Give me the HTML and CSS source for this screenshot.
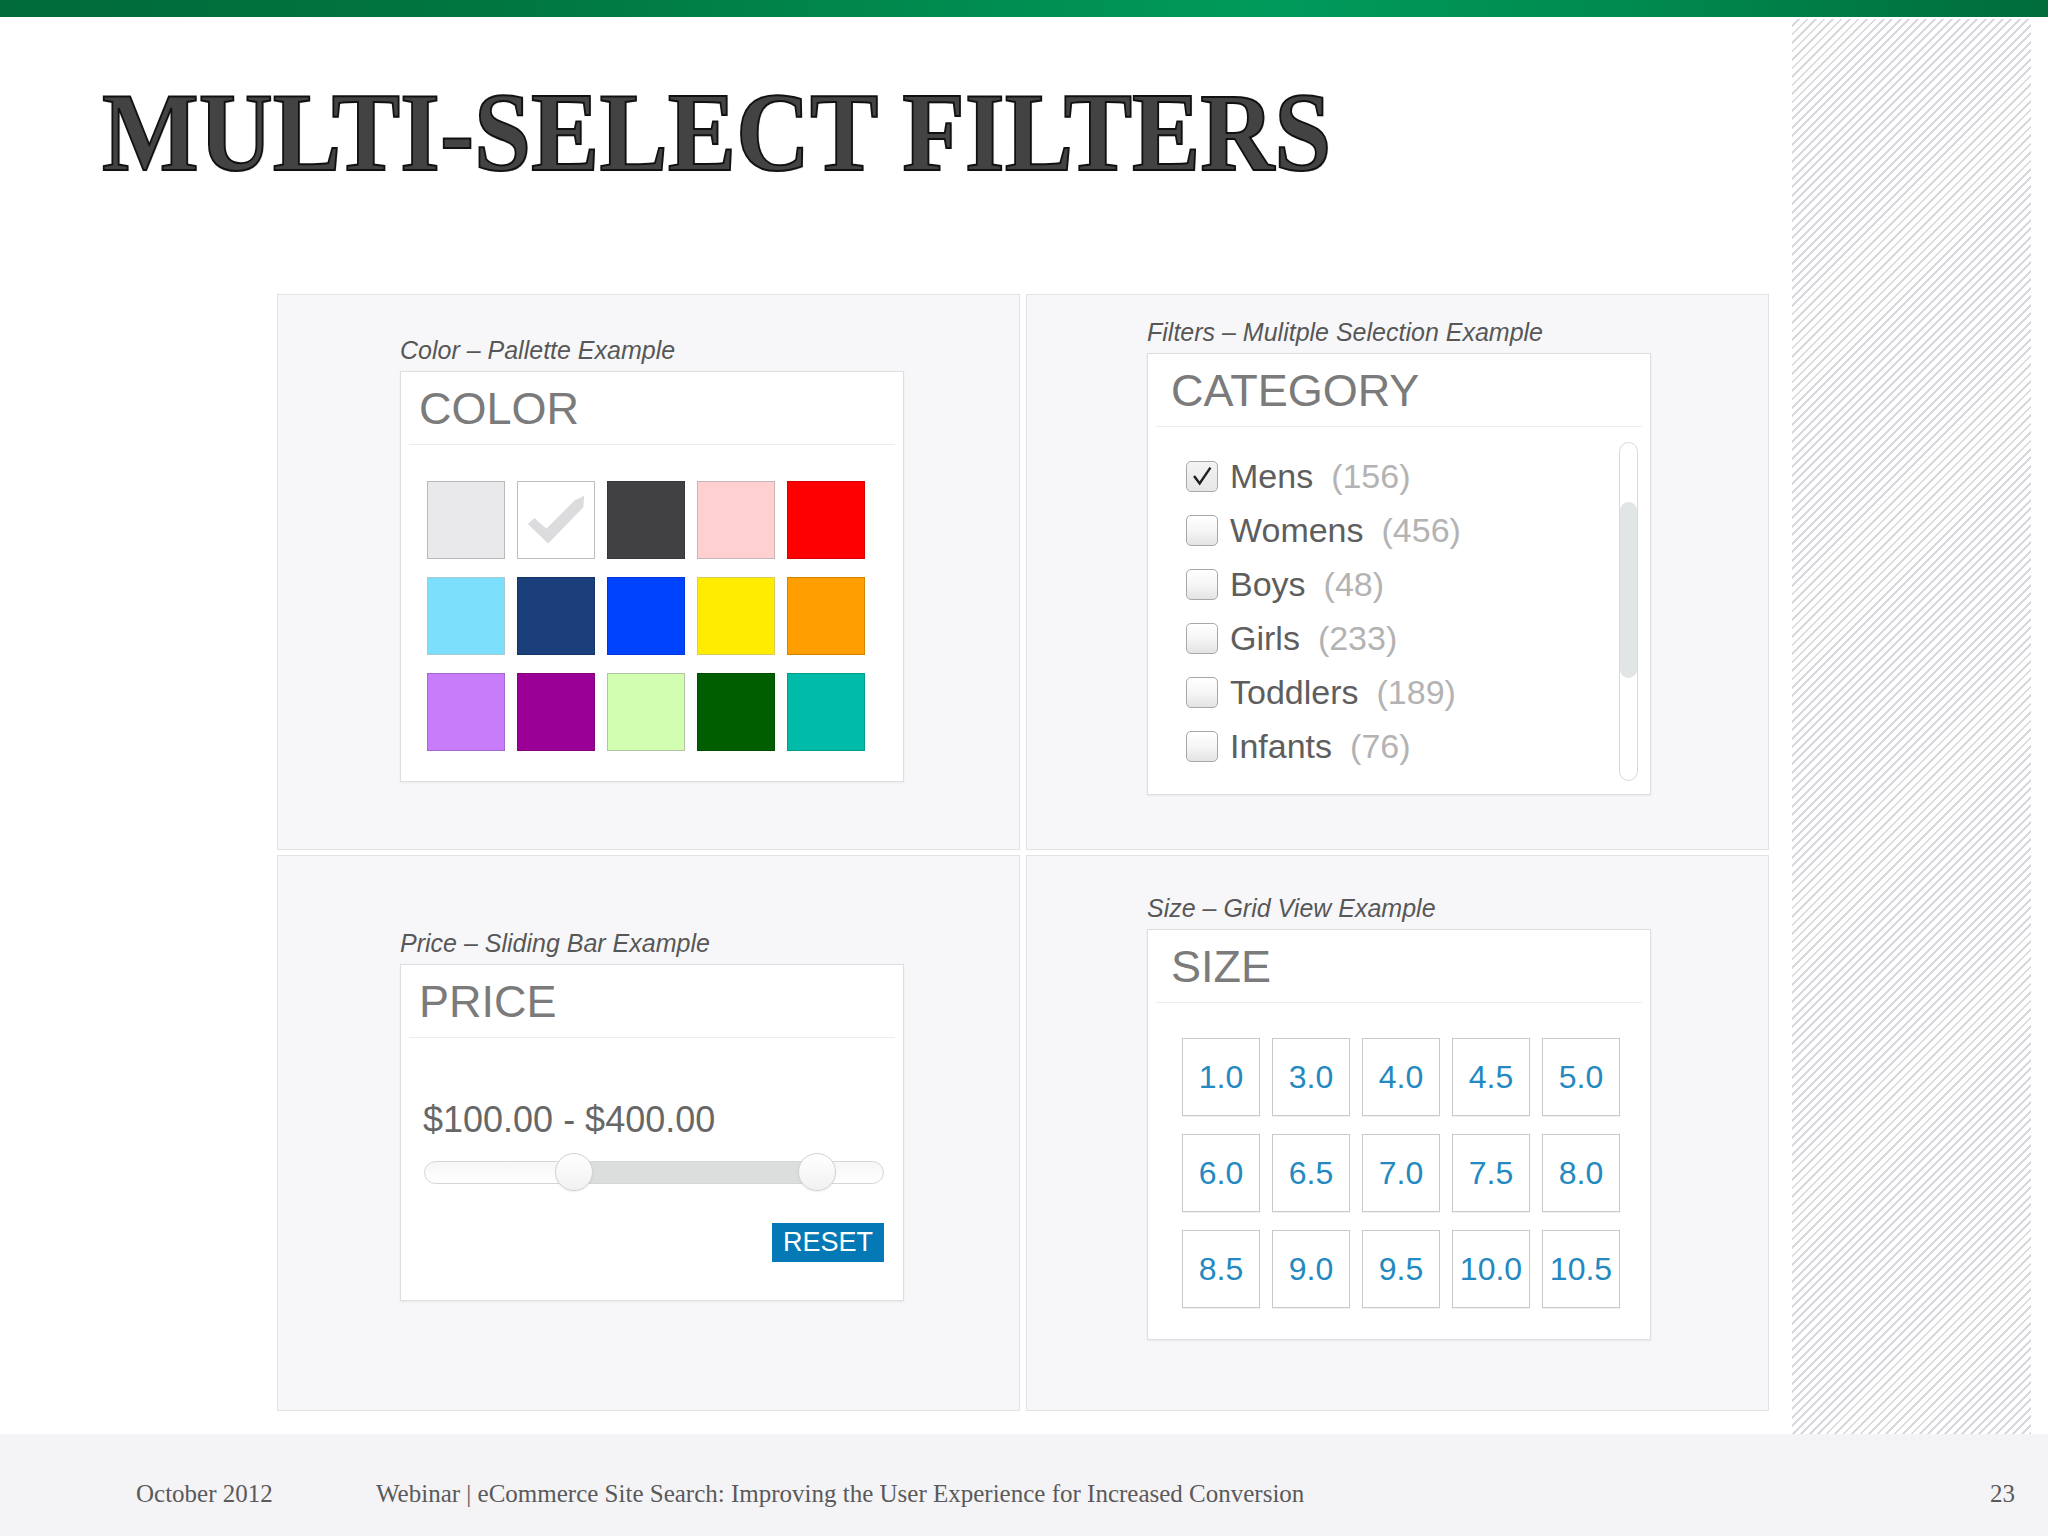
FILE: index.html
```html
<!DOCTYPE html>
<html lang="en">
<head>
<meta charset="utf-8">
<title>Multi-Select Filters</title>
<link rel="stylesheet" href="styles.css">
</head>
<body>
<div class="slide">
  <div class="topbar"></div>
  <div class="main">
    <div class="content">
      <h1 class="title"><span class="title-text">MULTI-SELECT FILTERS</span></h1>
      <div class="panels">
        <section class="panel panel-color">
          <div class="caption">Color – Pallette Example</div>
          <div class="card">
            <div class="card-head"><h2>COLOR</h2></div>
            <div class="swatches">
              <span class="swatch sw-lightgray"></span>
              <span class="swatch sw-white"><svg viewBox="0 0 78 78"><polygon points="10,43 17,37 29,48 58,19 68,14 67,26 31,63" fill="#dcdcde"/></svg></span>
              <span class="swatch sw-charcoal"></span>
              <span class="swatch sw-pink"></span>
              <span class="swatch sw-red"></span>
              <span class="swatch sw-sky"></span>
              <span class="swatch sw-navy"></span>
              <span class="swatch sw-blue"></span>
              <span class="swatch sw-yellow"></span>
              <span class="swatch sw-orange"></span>
              <span class="swatch sw-lavender"></span>
              <span class="swatch sw-purple"></span>
              <span class="swatch sw-mint"></span>
              <span class="swatch sw-green"></span>
              <span class="swatch sw-teal"></span>
            </div>
          </div>
        </section>
        <section class="panel panel-category">
          <div class="caption">Filters – Mulitple Selection Example</div>
          <div class="card">
            <div class="card-head"><h2>CATEGORY</h2></div>
            <div class="cat-body">
              <ul class="cat-list">
                <li class="cat-item"><span class="checkbox checked"><svg viewBox="0 0 32 31"><path d="M7.5 15 L13.5 23 L25 6" fill="none" stroke="#1f1f1f" stroke-width="2.6" stroke-linejoin="miter"/></svg></span>Mens<span class="count">(156)</span></li>
                <li class="cat-item"><span class="checkbox"></span>Womens<span class="count">(456)</span></li>
                <li class="cat-item"><span class="checkbox"></span>Boys<span class="count">(48)</span></li>
                <li class="cat-item"><span class="checkbox"></span>Girls<span class="count">(233)</span></li>
                <li class="cat-item"><span class="checkbox"></span>Toddlers<span class="count">(189)</span></li>
                <li class="cat-item"><span class="checkbox"></span>Infants<span class="count">(76)</span></li>
              </ul>
              <div class="scrollbar"><div class="thumb"></div></div>
            </div>
          </div>
        </section>
        <section class="panel panel-price">
          <div class="caption">Price – Sliding Bar Example</div>
          <div class="card">
            <div class="card-head"><h2>PRICE</h2></div>
            <div class="price-body">
              <div class="price-range">$100.00 - $400.00</div>
              <div class="slider">
                <div class="track">
                  <div class="fill"></div>
                  <div class="handle handle-min"></div>
                  <div class="handle handle-max"></div>
                </div>
              </div>
              <div class="reset-row"><span class="reset">RESET</span></div>
            </div>
          </div>
        </section>
        <section class="panel panel-size">
          <div class="caption">Size – Grid View Example</div>
          <div class="card">
            <div class="card-head"><h2>SIZE</h2></div>
            <div class="sizes">
              <span class="size">1.0</span>
              <span class="size">3.0</span>
              <span class="size">4.0</span>
              <span class="size">4.5</span>
              <span class="size">5.0</span>
              <span class="size">6.0</span>
              <span class="size">6.5</span>
              <span class="size">7.0</span>
              <span class="size">7.5</span>
              <span class="size">8.0</span>
              <span class="size">8.5</span>
              <span class="size">9.0</span>
              <span class="size">9.5</span>
              <span class="size">10.0</span>
              <span class="size">10.5</span>
            </div>
          </div>
        </section>
      </div>
    </div>
    <div class="hatch"></div>
  </div>
  <div class="footer">
    <span class="f-date">October 2012</span>
    <span class="f-title">Webinar | eCommerce Site Search: Improving the User Experience for Increased Conversion</span>
    <span class="f-page">23</span>
  </div>
</div>
</body>
</html>
```

FILE: styles.css
```css
* { box-sizing: border-box; }

body {
  margin: 0;
  background: #fff;
  font-family: "Liberation Sans", Arial, sans-serif;
}

.slide {
  width: 2048px;
  height: 1536px;
  display: flex;
  flex-direction: column;
  overflow: hidden;
}

.topbar {
  flex: none;
  height: 17px;
  background: linear-gradient(90deg, #006a3b 0%, #00773f 25%, #008f52 50%, #009b5c 62%, #008a4f 80%, #006c3c 100%);
}

.main {
  flex: 1;
  display: flex;
  min-height: 0;
}

.content {
  flex: 1;
  padding-top: 59px;
}

.hatch {
  width: 239px;
  margin: 2px 17px 0 0;
  background: repeating-linear-gradient(135deg, #ffffff 0px, #ffffff 4px, #d9d9dd 4px, #d9d9dd 6px);
}

.title {
  margin: 0 0 0 102px;
  height: 112px;
  font: bold 112px/112px "Liberation Serif", "Times New Roman", serif;
  white-space: nowrap;
}

.title-text {
  display: inline-block;
  transform: scaleX(0.915);
  transform-origin: 0 0;
  color: #434343;
  -webkit-text-stroke: 2px #111;
  text-shadow: 1px 1px 1px rgba(0, 0, 0, 0.25);
}

.panels {
  display: grid;
  grid-template-columns: 743px 743px;
  grid-template-rows: 556px 556px;
  column-gap: 6px;
  row-gap: 5px;
  margin: 106px 0 0 277px;
}

.panel {
  background: #f7f7f9;
  border: 1px solid #e2e2e5;
  padding-left: 122px;
}

.panel-color { padding-top: 40px; }
.panel-category { padding-top: 22px; padding-left: 120px; }
.panel-price { padding-top: 72px; }
.panel-size { padding-top: 37px; padding-left: 120px; }

.caption {
  font: italic 25px/30px "Liberation Sans", Arial, sans-serif;
  color: #575757;
  margin-bottom: 6px;
}

.card {
  width: 504px;
  background: #fff;
  border: 1px solid #dedee0;
  box-shadow: 0 1px 2px rgba(0, 0, 0, 0.06);
}

.card-head {
  height: 73px;
  margin: 0 8px;
  border-bottom: 1px solid #ededef;
  padding: 14px 0 0 10px;
}

.panel-category .card-head,
.panel-size .card-head { padding-left: 15px; }

.card-head h2 {
  margin: 0;
  font: normal 45px/45px "Liberation Sans", Arial, sans-serif;
  color: #7b7b7b;
}

/* Color swatches */
.swatches {
  display: grid;
  grid-template-columns: repeat(5, 78px);
  grid-auto-rows: 78px;
  column-gap: 12px;
  row-gap: 18px;
  padding: 36px 0 30px 26px;
}

.swatch {
  display: block;
  border: 1px solid rgba(0, 0, 0, 0.16);
}

.swatch svg { display: block; width: 100%; height: 100%; }

.sw-lightgray { background: #e9e9eb; border-color: #b8b8ba; }
.sw-white { background: #fff; border-color: #bdbdbf; }
.sw-charcoal { background: #414042; }
.sw-pink { background: #ffd0d0; border-color: #c9b4b4; }
.sw-red { background: #ff0000; }
.sw-sky { background: #7cdffc; border-color: #a8c9d2; }
.sw-navy { background: #1b3f7b; }
.sw-blue { background: #0043ff; }
.sw-yellow { background: #ffec00; border-color: #d8cb5a; }
.sw-orange { background: #ff9e00; }
.sw-lavender { background: #c77cfa; }
.sw-purple { background: #9b0096; }
.sw-mint { background: #d2feb2; border-color: #b2c4a4; }
.sw-green { background: #005e00; }
.sw-teal { background: #00bba8; }

/* Category list */
.cat-body {
  display: flex;
  padding: 15px 12px 13px 38px;
}

.cat-list {
  flex: 1;
  list-style: none;
  margin: 0;
  padding: 7px 0 8px;
}

.cat-item {
  height: 54px;
  display: flex;
  align-items: center;
  font-size: 34px;
  color: #5e5e5e;
}

.checkbox {
  flex: none;
  width: 32px;
  height: 31px;
  margin-right: 12px;
  border: 1px solid #a8a8a8;
  border-radius: 5px;
  background: linear-gradient(#ffffff 0%, #f6f6f6 50%, #e3e3e3 100%);
}

.checkbox svg { display: block; width: 100%; height: 100%; }

.checkbox.checked { background: linear-gradient(#f4f4f4 0%, #e6e6e6 100%); }

.count {
  color: #b3b3b3;
  margin-left: 18px;
}

.scrollbar {
  flex: none;
  width: 19px;
  border: 1px solid #d9d9db;
  border-radius: 10px;
  background: #fff;
}

.thumb {
  margin-top: 59px;
  height: 176px;
  background: #e2e5e5;
  border-radius: 9px;
}

/* Price slider */
.price-body {
  padding: 64px 19px 38px 23px;
}

.price-range {
  font-size: 36px;
  line-height: 36px;
  color: #676767;
  margin-left: -1px;
}

.slider {
  height: 38px;
  margin-top: 15px;
  display: flex;
  align-items: center;
}

.track {
  flex: 1;
  height: 23px;
  position: relative;
  border: 1px solid #d6d6d8;
  border-radius: 12px;
  background: linear-gradient(#f6f6f6, #ffffff);
}

.fill {
  position: absolute;
  left: 148px;
  width: 245px;
  top: 0;
  bottom: 0;
  background: #dcdede;
}

.handle {
  position: absolute;
  top: -9px;
  width: 38px;
  height: 38px;
  border-radius: 50%;
  border: 1px solid #d2d2d4;
  background: linear-gradient(#ffffff, #f1f1f1);
  box-shadow: 0 1px 2px rgba(0, 0, 0, 0.08);
}

.handle-min { left: 130px; }
.handle-max { left: 373px; }

.reset-row {
  display: flex;
  justify-content: flex-end;
  margin-top: 32px;
}

.reset {
  width: 112px;
  height: 39px;
  background: #0479b5;
  color: #fff;
  font-size: 27px;
  line-height: 39px;
  text-align: center;
}

/* Size grid */
.sizes {
  display: grid;
  grid-template-columns: repeat(5, 78px);
  grid-auto-rows: 78px;
  column-gap: 12px;
  row-gap: 18px;
  padding: 35px 0 31px 34px;
}

.size {
  display: flex;
  align-items: center;
  justify-content: center;
  border: 1.5px solid #c9c9cb;
  box-shadow: 0 1px 1px rgba(0, 0, 0, 0.05);
  font-size: 32px;
  color: #2389c0;
}

/* Footer */
.footer {
  flex: none;
  height: 102px;
  display: flex;
  align-items: center;
  padding-top: 18px;
  background: #f4f3f6;
  font: 25px "Liberation Serif", "Times New Roman", serif;
  color: #5a5a5a;
}

.f-date { margin-left: 136px; width: 240px; }
.f-title { flex: 1; }
.f-page { margin-right: 33px; }
```
